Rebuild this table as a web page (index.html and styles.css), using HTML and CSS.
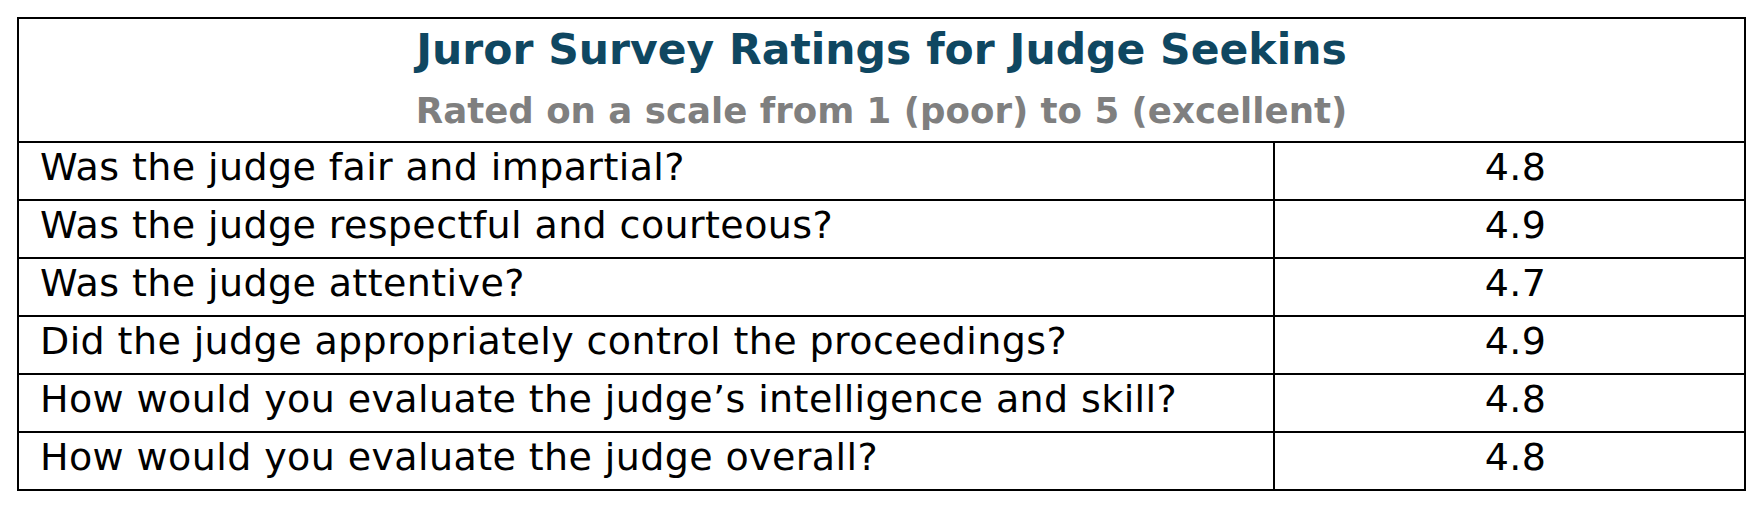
FILE: index.html
```html
<!DOCTYPE html>
<html lang="en">
<head>
<meta charset="utf-8">
<title>Juror Survey Ratings for Judge Seekins</title>
<link rel="stylesheet" href="styles.css">
</head>
<body>
<div class="sheet">
  <div class="head">
    <div class="title">Juror Survey Ratings for Judge Seekins</div>
    <div class="sub">Rated on a scale from 1 (poor) to 5 (excellent)</div>
  </div>
  <div class="row"><div class="q">Was the judge fair and impartial?</div><div class="v">4.8</div></div>
  <div class="row"><div class="q">Was the judge respectful and courteous?</div><div class="v">4.9</div></div>
  <div class="row"><div class="q">Was the judge attentive?</div><div class="v">4.7</div></div>
  <div class="row"><div class="q">Did the judge appropriately control the proceedings?</div><div class="v">4.9</div></div>
  <div class="row"><div class="q">How would you evaluate the judge’s intelligence and skill?</div><div class="v">4.8</div></div>
  <div class="row"><div class="q">How would you evaluate the judge overall?</div><div class="v">4.8</div></div>
</div>
</body>
</html>
```
FILE: styles.css
```css
html, body {
  margin: 0;
  padding: 0;
  background: #fff;
}
body {
  font-family: "DejaVu Sans", "Liberation Sans", sans-serif;
  color: #000;
}
.sheet {
  margin: 17px 0 0 17px;
  width: 1729px;
  border: 2px solid #000;
  box-sizing: border-box;
}
.head {
  height: 124px;
  box-sizing: border-box;
  border-bottom: 2px solid #000;
  text-align: center;
  font-weight: 700;
  padding-top: 6px;
}
.title {
  color: #0f4761;
  font-size: 42.5px;
  line-height: 50px;
}
.sub {
  color: #7f7f7f;
  font-size: 35.6px;
  line-height: 44px;
  margin-top: 14px;
}
.row {
  display: grid;
  grid-template-columns: 1256px 1fr;
  height: 58px;
  box-sizing: border-box;
  border-bottom: 2px solid #000;
  font-size: 38px;
  letter-spacing: 0.4px;
  line-height: 48px;
}
.row:last-child {
  border-bottom: 0;
  height: 56px;
}
.q {
  border-right: 2px solid #000;
  padding-left: 21px;
  white-space: nowrap;
}
.v {
  text-align: center;
  padding-left: 12px;
}
```
